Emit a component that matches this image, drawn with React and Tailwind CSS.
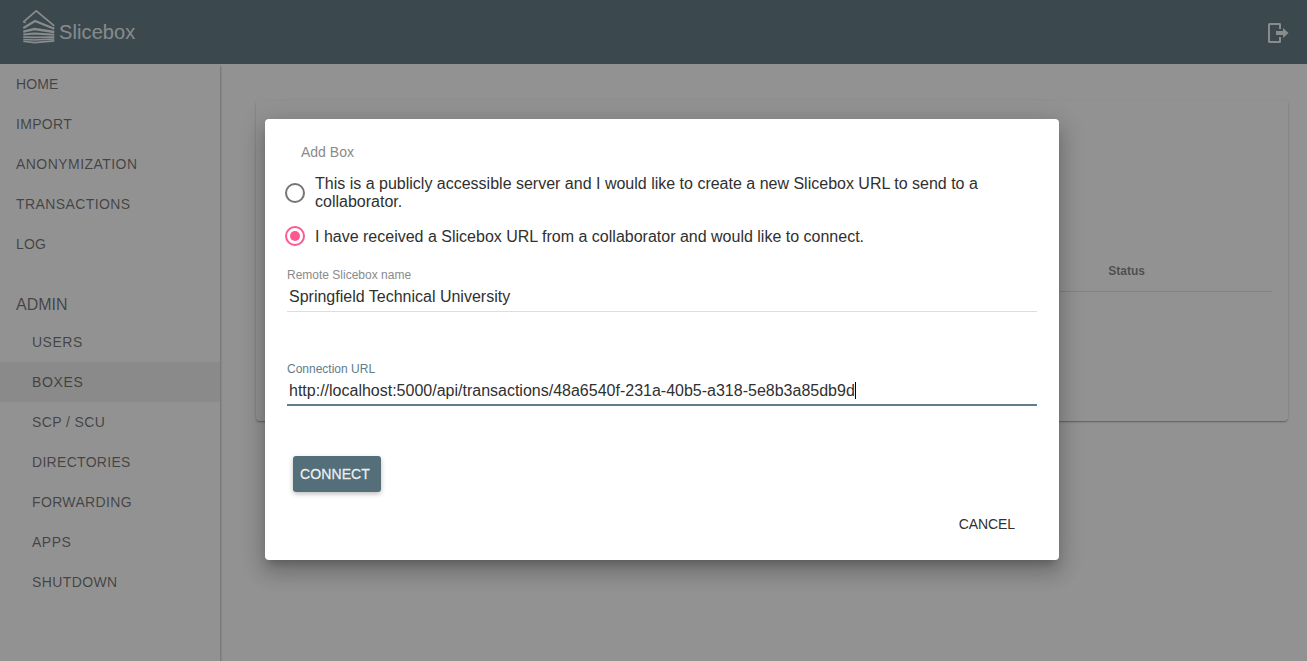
const mainLinks = [
  { label: "HOME", cls: "tracking-[0.1px]" },
  { label: "IMPORT", cls: "tracking-[0.3px]" },
  { label: "ANONYMIZATION", cls: "tracking-[0.45px]" },
  { label: "TRANSACTIONS", cls: "tracking-[0.4px]" },
  { label: "LOG", cls: "tracking-[0.1px]" },
];

const adminLinks = [
  { label: "USERS", cls: "tracking-[0.5px]" },
  { label: "BOXES", cls: "bg-[#eaeaea] tracking-[0.65px]" },
  { label: "SCP / SCU", cls: "tracking-[0.4px]" },
  { label: "DIRECTORIES", cls: "tracking-[0.3px]" },
  { label: "FORWARDING", cls: "tracking-[0.35px]" },
  { label: "APPS", cls: "tracking-[0.5px]" },
  { label: "SHUTDOWN", cls: "tracking-[0.4px]" },
];

function Logo() {
  return (
    <svg width="32" height="35" viewBox="0 0 32 35" fill="none" stroke="#fff" strokeOpacity="0.87">
      <path d="M0.3 13 L13.2 1.8 L31.3 16.8" strokeWidth="1.7" />
      <path d="M0.2 12.8 L3 14" strokeWidth="1" />
      <path d="M0.3 19 L12 12 L31.3 19.8" strokeWidth="2.2" />
      <path d="M0.3 22.6 L11.5 20 L31.3 23" strokeWidth="2.4" />
      <path d="M0.3 25.6 L11.5 24.4 L31.3 25.8" strokeWidth="2" />
      <path d="M0.3 28.2 L11.5 28.3 L31.3 28.2" strokeWidth="1.8" />
      <path d="M0.3 30.4 L11.5 31 L31.3 30.1" strokeWidth="1.5" />
      <path d="M0.3 32.2 L11.5 33.6 L31.3 31.9" strokeWidth="1.6" />
    </svg>
  );
}

function LogoutIcon() {
  return (
    <svg width="21" height="21" viewBox="0 0 21 21" fill="#fff" fillOpacity="0.87">
      <path d="M2 0 H12 Q13 0 13 1.5 V6 H11 V2 H2 V18 H11 V14 H13 V18.5 Q13 20 12 20 H1.5 Q0 20 0 18.5 V1.5 Q0 0 1.5 0 Z" />
      <path d="M8 8 H15 V5 L20.5 10 L15 15 V12 H8 Z" />
    </svg>
  );
}

function Radio({ checked }) {
  return checked ? (
    <span className="flex size-5 shrink-0 items-center justify-center rounded-full border-2 border-[#ff5790]">
      <span className="size-2.5 rounded-full bg-[#ff5790]" />
    </span>
  ) : (
    <span className="size-5 shrink-0 rounded-full border-2 border-[#757575]" />
  );
}

function AddBoxDialog() {
  return (
    <div className="mt-[119px] ml-[265px] h-[441px] w-[794px] rounded bg-white text-[#303030] shadow-[0_7px_8px_-4px_rgba(0,0,0,0.2),0_13px_19px_2px_rgba(0,0,0,0.14),0_5px_24px_4px_rgba(0,0,0,0.12)]">
      <h2 className="pt-6 pl-9 text-sm leading-[18px] text-[#8a8a8a]">Add Box</h2>
      <div className="mt-3.5 flex h-9 items-center gap-2.5 pl-5">
        <Radio />
        <span className="w-[700px] text-base leading-[18px]">
          This is a publicly accessible server and I would like to create a new Slicebox URL to send to a collaborator.
        </span>
      </div>
      <div className="mt-[15px] flex h-5 items-center gap-2.5 pl-5">
        <Radio checked />
        <span className="pt-0.5 text-base leading-[18px]">
          I have received a Slicebox URL from a collaborator and would like to connect.
        </span>
      </div>
      <div className="mx-[22px] mt-5 flex h-[46px] flex-col border-b border-[#dedede]">
        <label className="pt-px text-xs leading-4 text-[#8a8a8a]">Remote Slicebox name</label>
        <span className="pt-[5px] pl-0.5 text-base leading-[18px]">Springfield Technical University</span>
      </div>
      <div className="mx-[22px] mt-12 flex h-[46px] flex-col border-b-2 border-[#607d8b]">
        <label className="pt-px text-xs leading-4 text-[#607d8b]">Connection URL</label>
        <span className="flex items-center pt-[5px] pl-0.5 text-base leading-[18px]">
          http://localhost:5000/api/transactions/48a6540f-231a-40b5-a318-5e8b3a85db9d
          <span className="-mt-0.5 h-[17px] w-px bg-black" />
        </span>
      </div>
      <button className="mt-[50px] ml-7 block h-9 w-[88px] rounded-[3px] bg-[#546e7a] pr-1 text-sm font-medium tracking-[0.1px] text-white/87 shadow-[0_2px_5px_rgba(0,0,0,0.26)] [-webkit-text-stroke:0.3px]">
        CONNECT
      </button>
      <div className="mt-[14px] flex justify-end pr-11">
        <button className="h-9 text-sm tracking-[-0.1px]">CANCEL</button>
      </div>
    </div>
  );
}

export default function App() {
  return (
    <div className="relative flex h-[661px] w-[1307px] flex-col overflow-hidden bg-[#fafafa] font-['Liberation_Sans',Arial,sans-serif]">
      <header className="flex h-16 shrink-0 items-start justify-between bg-[#546e7a] pr-[18px] pl-[23px]">
        <div className="flex gap-1 pt-[9px]">
          <Logo />
          <h1 className="pt-[11px] text-xl leading-6 tracking-[0.1px] text-white/87">Slicebox</h1>
        </div>
        <div className="pt-[23px]">
          <LogoutIcon />
        </div>
      </header>
      <div className="flex min-h-0 flex-1">
        <nav className="w-[220px] shrink-0 bg-[#fafafa] text-sm text-black/62 shadow-[1px_2px_2px_rgba(0,0,0,0.26)]">
          {mainLinks.map((l) => (
            <div key={l.label} className={"flex h-10 items-center pl-4 " + l.cls}>{l.label}</div>
          ))}
          <div className="mt-5 flex h-[38px] items-center pt-1 pl-4 text-base">ADMIN</div>
          {adminLinks.map((l) => (
            <div key={l.label} className={"flex h-10 items-center pl-8 " + l.cls}>{l.label}</div>
          ))}
        </nav>
        <main className="flex-1 pt-9 pr-[19px] pl-9">
          <section className="h-[321px] rounded-sm px-4 pt-[146px] shadow-[0_1px_3px_0_rgba(0,0,0,0.2),0_1px_1px_0_rgba(0,0,0,0.14),0_2px_1px_-1px_rgba(0,0,0,0.12)]">
            <div className="flex h-[46px] items-center justify-end border-b border-black/12 pt-1 pr-[127px] text-xs font-bold text-black/54">
              Status
            </div>
          </section>
        </main>
      </div>
      <div className="absolute inset-0 bg-[rgba(33,33,33,0.48)]">
        <AddBoxDialog />
      </div>
    </div>
  );
}
